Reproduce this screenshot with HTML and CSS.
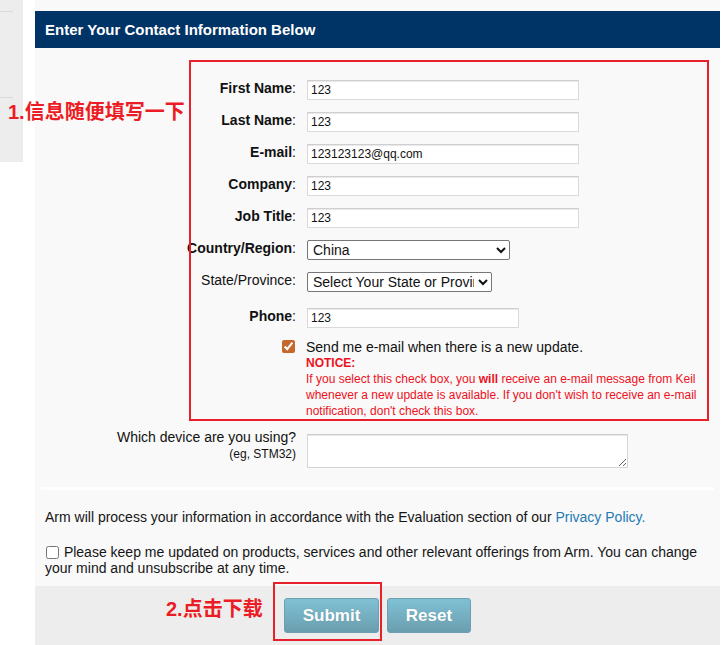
FILE: index.html
```html
<!DOCTYPE html>
<html lang="en">
<head>
    <meta charset="UTF-8">
    <title>Contact Information</title>
    <link rel="stylesheet" href="styles.css">
</head>
<body>
<div class="page">
    <div class="sidebar">
        <div class="side-line"></div>
        <div class="side-line second"></div>
    </div>

    <div class="main">
        <h2 class="head">Enter Your Contact Information Below</h2>

        <div class="form">
            <div class="row">
                <label class="lbl"><b>First Name</b>:</label>
                <input type="text" class="txt" value="123">
            </div>
            <div class="row">
                <label class="lbl"><b>Last Name</b>:</label>
                <input type="text" class="txt" value="123">
            </div>
            <div class="row">
                <label class="lbl"><b>E-mail</b>:</label>
                <input type="text" class="txt" value="123123123@qq.com">
            </div>
            <div class="row">
                <label class="lbl"><b>Company</b>:</label>
                <input type="text" class="txt" value="123">
            </div>
            <div class="row">
                <label class="lbl"><b>Job Title</b>:</label>
                <input type="text" class="txt" value="123">
            </div>
            <div class="row">
                <label class="lbl"><b>Country/Region</b>:</label>
                <select class="sel country">
                    <option>China</option>
                </select>
            </div>
            <div class="row">
                <label class="lbl">State/Province:</label>
                <select class="sel state">
                    <option>Select Your State or Province</option>
                </select>
            </div>
            <div class="row phone-row">
                <label class="lbl"><b>Phone</b>:</label>
                <input type="text" class="txt phone" value="123">
            </div>

            <div class="row check-row">
                <div class="lbl"><input type="checkbox" class="upd" checked></div>
                <div class="check-text">
                    <div class="send">Send me e-mail when there is a new update.</div>
                    <div class="notice"><b>NOTICE:</b></div>
                    <div class="notice">If you select this check box, you <b>will</b> receive an e-mail message from Keil whenever a new update is available. If you don't wish to receive an e-mail notification, don't check this box.</div>
                </div>
            </div>

            <div class="row device-row">
                <label class="lbl dev-lbl">Which device are you using?<br><small>(eg, STM32)</small></label>
                <textarea class="device"></textarea>
            </div>
        </div>

        <div class="sep"></div>

        <p class="info">Arm will process your information in accordance with the Evaluation section of our <a href="#">Privacy Policy.</a></p>

        <p class="info optin"><input type="checkbox" class="keep"> Please keep me updated on products, services and other relevant offerings from Arm. You can change your mind and unsubscribe at any time.</p>

        <div class="actions">
            <button class="btn submit">Submit</button>
            <button class="btn">Reset</button>
        </div>
    </div>

    <!-- screenshot annotations -->
    <div class="mark box-form"></div>
    <div class="note note-form">1.信息随便填写一下</div>
    <div class="mark box-submit"></div>
    <div class="note note-submit">2.点击下载</div>
</div>
</body>
</html>
```

FILE: styles.css
```css
html, body {
    margin: 0;
    padding: 0;
    height: 645px;
    overflow: hidden;
}

body {
    background: #fff;
    font-family: "Liberation Sans", Arial, sans-serif;
    color: #111;
}

.page {
    position: relative;
    display: flex;
    gap: 12px;
    align-items: flex-start;
}

.sidebar {
    width: 23px;
    height: 162px;
    background: #ededed;
    padding-top: 11px;
    box-sizing: border-box;
}

.side-line {
    width: 13px;
    height: 1px;
    background: #d9d9d9;
}

.side-line.second {
    margin-top: 85px;
}

.main {
    width: 685px;
    background: #f9f9f9;
    padding-top: 11px;
}

.head {
    margin: 0;
    height: 37px;
    line-height: 37px;
    background: #003366;
    color: #fff;
    font-size: 15px;
    font-weight: bold;
    padding-left: 10px;
}

.form {
    padding-top: 26px;
}

.row {
    display: flex;
    align-items: center;
    height: 32px;
}

.lbl {
    width: 261px;
    margin-right: 11px;
    padding-bottom: 5px;
    text-align: right;
    font-size: 14px;
    line-height: 16px;
    color: #111;
    flex-shrink: 0;
}

.txt {
    width: 272px;
    height: 20px;
    box-sizing: border-box;
    padding: 0 3px;
    border: 1px solid #dadada;
    border-top-color: #cfcfcf;
    box-shadow: inset 0 1px 0 #e9e9e9;
    background: #fff;
    font-family: "Liberation Sans", Arial, sans-serif;
    font-size: 12px;
    color: #111;
    outline: none;
}

.txt.phone {
    width: 212px;
}

.sel {
    height: 20px;
    font-family: "Liberation Sans", Arial, sans-serif;
    font-size: 14px;
    color: #111;
    background: #fff;
    border: 1px solid #767676;
    border-radius: 2px;
    padding: 0 1px;
}

.sel.country {
    width: 203px;
}

.sel.state {
    width: 185px;
}

.phone-row {
    margin-top: 4px;
}

.check-row {
    height: auto;
    align-items: flex-start;
    margin-top: 5px;
}

.check-row .lbl {
    margin-right: 10px;
    padding-bottom: 0;
}

.upd {
    margin: 1px 1px 0 0;
    width: 13px;
    height: 13px;
    accent-color: #c6672c;
    vertical-align: top;
}

.check-text {
    width: 396px;
    line-height: 16px;
}

.send {
    font-size: 14px;
    color: #111;
}

.notice {
    font-size: 12px;
    color: #ee1122;
}

.device-row {
    height: auto;
    align-items: flex-start;
    margin-top: 10px;
}

.dev-lbl {
    padding-bottom: 0;
}

.dev-lbl small {
    font-size: 12px;
}

.device {
    margin: 5px 0 0;
    width: 321px;
    height: 34px;
    box-sizing: border-box;
    border: 1px solid #d6d6d6;
    border-top-color: #cccccc;
    box-shadow: inset 0 1px 0 #e9e9e9;
    background: #fff;
    resize: vertical;
}

.sep {
    height: 3px;
    background: #fff;
    margin: 19px 6px 0;
}

.info {
    margin: 19px 0 0;
    padding: 0 10px;
    font-size: 14px;
    line-height: 16px;
    color: #151515;
}

.info a {
    color: #2479b5;
    text-decoration: none;
}

.keep {
    margin: 0 1px 0 1px;
    width: 13px;
    height: 13px;
    vertical-align: -2px;
}

.actions {
    margin-top: 10px;
    background: #ededed;
    height: 59px;
    padding: 12px 0 0 249px;
    box-sizing: border-box;
    display: flex;
    gap: 8px;
    align-items: flex-start;
}

.btn {
    height: 35px;
    width: 84px;
    border: 1px solid #6d9fb0;
    border-radius: 3px;
    background: linear-gradient(#80c1d5, #6a9eae);
    color: #fff;
    font-family: "Liberation Sans", Arial, sans-serif;
    font-size: 17px;
    font-weight: bold;
    text-shadow: 0 0 1px rgba(0, 0, 0, 0.15);
    cursor: pointer;
}

.btn.submit {
    width: 95px;
}

/* red annotation marks on top of the page */
.mark {
    position: absolute;
    border: 2px solid #e8202a;
    box-sizing: border-box;
}

.box-form {
    left: 189px;
    top: 60px;
    width: 520px;
    height: 361px;
}

.box-submit {
    left: 273px;
    top: 582px;
    width: 109px;
    height: 59px;
}

.note {
    position: absolute;
    color: #ec1c24;
    font-family: "Liberation Sans", "Noto Sans CJK SC", sans-serif;
    font-size: 20px;
    font-weight: bold;
    line-height: 24px;
    white-space: nowrap;
}

.note-form {
    left: 8px;
    top: 100px;
}

.note-submit {
    left: 166px;
    top: 597px;
}
```
